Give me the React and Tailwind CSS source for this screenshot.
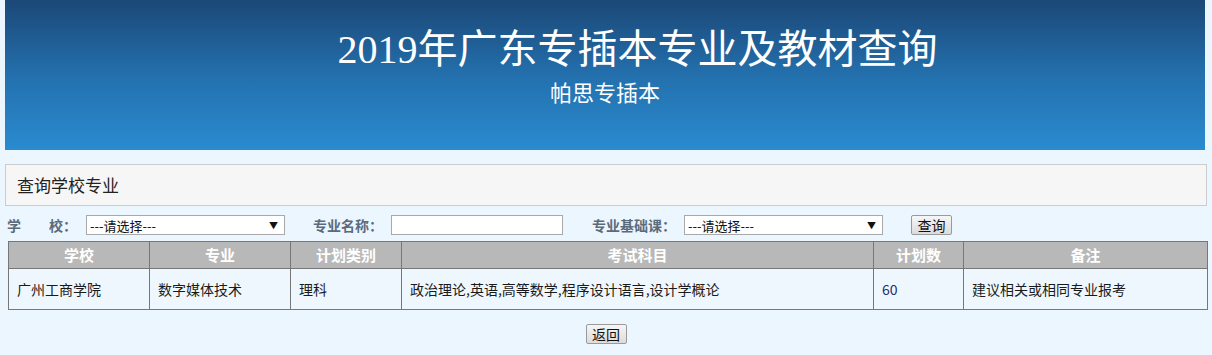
import React from 'react'

const cjk = { fontFamily: '"Noto Sans CJK SC", "Liberation Sans", sans-serif' }
const serif = { fontFamily: '"Liberation Serif", "Noto Sans CJK SC", serif' }

function FakeSelect({ width }) {
  return (
    <div
      className={`h-[20px] ${width} bg-white border border-[#a9a9a9] flex items-center justify-between pl-[3px] pr-[6px] text-[13px] font-normal text-[#111] leading-none`}
    >
      <span>---请选择---</span>
      <span className="text-[9px]">▼</span>
    </div>
  )
}

function Btn({ children }) {
  return (
    <button className="h-[20px] w-[41px] border border-[#9a9a9a] rounded-[2px] bg-gradient-to-b from-[#f6f6f6] to-[#dcdcdc] text-[14px] font-normal text-[#111] leading-none flex items-center justify-center">
      {children}
    </button>
  )
}

const cols = [
  { title: '学校', w: 'w-[141px]', value: '广州工商学院' },
  { title: '专业', w: 'w-[141px]', value: '数字媒体技术' },
  { title: '计划类别', w: 'w-[111px]', value: '理科' },
  { title: '考试科目', w: 'w-[472px]', value: '政治理论,英语,高等数学,程序设计语言,设计学概论' },
  { title: '计划数', w: 'w-[90px]', value: '60', color: 'text-[#1c2f6e]' },
  { title: '备注', w: 'w-[244px]', value: '建议相关或相同专业报考' },
]

export default function App() {
  return (
    <div className="w-[1212px] h-[355px] bg-[#ecf6fe] overflow-hidden" style={cjk}>
      {/* banner */}
      <div className="ml-[5px] w-[1200px] h-[150px] bg-gradient-to-b from-[#1b4877] via-[#2370ad] to-[#2a8bd0] flex flex-col items-center pt-[28px] text-white">
        <h1 className="text-[40px] leading-[44px] font-normal pl-[65px]" style={serif}>
          2019年广东专插本专业及教材查询
        </h1>
        <p className="text-[22px] leading-[24px] mt-[7px]">帕思专插本</p>
      </div>

      {/* panel */}
      <div className="ml-[5px] mt-[14px] w-[1202px] h-[42px] bg-[#f6f6f6] border border-[#cccccc] flex items-center pl-[11px]">
        <span className="text-[17px] text-[#222]">查询学校专业</span>
      </div>

      {/* search row */}
      <div className="mt-[9px] flex items-center h-[20px] text-[14px] font-bold text-[#5b6b7b]">
        <span className="ml-[7px] whitespace-pre">学　　校：</span>
        <div className="ml-[9px]">
          <FakeSelect width="w-[199px]" />
        </div>
        <span className="ml-[28px]">专业名称：</span>
        <div className="ml-[8px] w-[172px] h-[20px] bg-white border border-[#a9a9a9]" />
        <span className="ml-[29px]">专业基础课：</span>
        <div className="ml-[8px]">
          <FakeSelect width="w-[199px]" />
        </div>
        <div className="ml-[28px]">
          <Btn>查询</Btn>
        </div>
      </div>

      {/* table */}
      <table className="ml-[8px] mt-[6px] w-[1199px] border-collapse table-fixed">
        <thead>
          <tr className="h-[27px] bg-[#b8b8b8]">
            {cols.map((c) => (
              <th key={c.title} className={`${c.w} border border-[#777] text-white text-[15px] font-bold text-center p-0`}>
                {c.title}
              </th>
            ))}
          </tr>
        </thead>
        <tbody>
          <tr className="h-[41px] bg-[#eef7fe]">
            {cols.map((c) => (
              <td
                key={c.title}
                className={`border border-[#777] pl-[8px] text-[14px] text-left ${c.color || 'text-[#1a1a1a]'}`}
              >
                {c.value}
              </td>
            ))}
          </tr>
        </tbody>
      </table>

      <div className="mt-[14px] flex justify-center">
        <Btn>返回</Btn>
      </div>
    </div>
  )
}
